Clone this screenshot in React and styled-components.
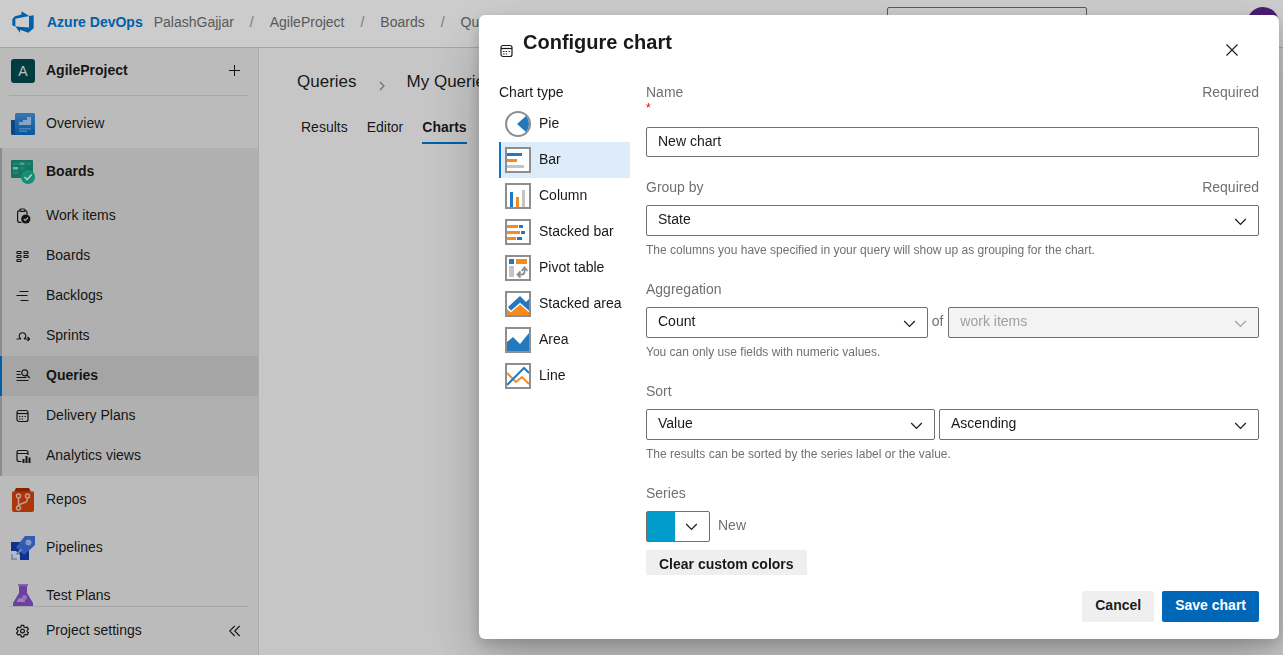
import React from "react";
import styled, { createGlobalStyle, css } from "styled-components";

const Global = createGlobalStyle`
  *, *::before, *::after { box-sizing: border-box; }
  html, body { margin: 0; height: 100%; }
  body {
    font-family: "Liberation Sans", Arial, sans-serif;
    font-size: 14px;
    line-height: 20px;
    color: rgba(0, 0, 0, 0.9);
    overflow: hidden;
  }
  #root { height: 100%; }
  button, input, select { font: inherit; color: inherit; margin: 0; }
  a { color: inherit; text-decoration: none; }
  svg { display: block; flex: none; }
`;

/* ---------- Page shell ---------- */

const Page = styled.div`
  display: flex;
  flex-direction: column;
  height: 100vh;
  background: #f8f8f8;
`;

const Header = styled.header`
  display: flex;
  align-items: center;
  height: 48px;
  flex: none;
  padding: 0 4px 4px 11px;
  background: #fff;
  border-bottom: 1px solid #d0d0d0;
`;

const Brand = styled.a`
  display: flex;
  align-items: center;
  gap: 12px;
  font-weight: bold;
  color: #0078d4;
`;

const Crumbs = styled.nav`
  display: flex;
  flex: 1;
  min-width: 0;
  margin-left: 11px;
  gap: 16px;
  color: #707070;
  white-space: nowrap;
  overflow: hidden;
`;

const Slash = styled.span`
  color: #9a9a9a;
`;

const Search = styled.input`
  width: 200px;
  height: 32px;
  margin: 2px 160px 0 0;
  padding: 0 8px;
  border: 1px solid #707070;
  border-radius: 2px;
  background: #fff;
`;

const Avatar = styled.button`
  width: 32px;
  height: 32px;
  margin-top: 2px;
  border: 0;
  border-radius: 50%;
  background: #5c2490;
  color: #fff;
`;

const Body = styled.div`
  display: flex;
  flex: 1;
  min-height: 0;
`;

/* ---------- Sidebar ---------- */

const Sidebar = styled.aside`
  display: flex;
  flex-direction: column;
  width: 259px;
  flex: none;
  background: #eaeaea;
  border-right: 1px solid #d6d6d6;
`;

const ProjectRow = styled.div`
  display: flex;
  align-items: center;
  height: 48px;
  flex: none;
  margin: 0 10px 4px 9px;
  padding: 0 8px 2px 2px;
  border-bottom: 1px solid #d0d0d0;
`;

const ProjectTile = styled.span`
  width: 24px;
  height: 24px;
  margin-right: 11px;
  border-radius: 3px;
  background: #004b50;
  color: #e8f0f0;
  line-height: 25px;
  text-align: center;
`;

const ProjectName = styled.a`
  flex: 1;
  padding-bottom: 2px;
  font-weight: bold;
`;

const IconButton = styled.button`
  display: flex;
  padding: 0;
  border: 0;
  background: none;
  cursor: pointer;
`;

const Nav = styled.nav`
  flex: 1;
  min-height: 0;
  overflow: hidden;
`;

const Group = styled.div`
  background: #dcdcdc;
  border-left: 2px solid #b0b0b0;
`;

const NavItem = styled.a`
  display: flex;
  align-items: center;
  height: ${(p) => (p.$sub ? 40 : 48)}px;
  padding-left: ${(p) => (p.$grouped ? 9 : 11)}px;
  font-weight: ${(p) => (p.$bold ? "bold" : "normal")};
  ${(p) =>
    p.$current &&
    css`
      margin-left: -2px;
      border-left: 2px solid #0078d4;
      background: #cfcfcf;
    `}
`;

const NavIcon = styled.span`
  display: flex;
  align-items: center;
  justify-content: center;
  width: 24px;
  height: 24px;
  margin-right: 11px;
`;

const NavText = styled.span`
  padding-bottom: 2px;
`;

const SidebarFooter = styled.div`
  display: flex;
  align-items: center;
  height: 49px;
  flex: none;
  margin: 0 10px 0 9px;
  padding: 0 7px 0 2px;
  border-top: 1px solid #d0d0d0;
`;

const FooterLink = styled.a`
  display: flex;
  flex: 1;
  align-items: center;
`;

/* ---------- Main area ---------- */

const Main = styled.main`
  flex: 1;
  min-width: 0;
  padding: 21px 38px;
`;

const Path = styled.div`
  display: flex;
  align-items: center;
  font-size: 17px;
  line-height: 26px;
  white-space: nowrap;
`;

const PathArrow = styled.span`
  margin: 8px 20px 0 21px;
`;

const TabRow = styled.div`
  display: flex;
  gap: 19px;
  margin-top: 21px;
  padding-left: 4px;
`;

const Tab = styled.a`
  height: 28px;
  padding-top: 1px;
  border-bottom: 2px solid ${(p) => (p.$active ? "#0078d4" : "transparent")};
  font-weight: ${(p) => (p.$active ? "bold" : "normal")};
`;

/* ---------- Dialog ---------- */

const Backdrop = styled.div`
  position: fixed;
  inset: 0;
  display: flex;
  justify-content: flex-end;
  padding: 15px 4px 16px;
  background: rgba(0, 0, 0, 0.2);
`;

const Dialog = styled.section`
  display: flex;
  flex-direction: column;
  width: 800px;
  max-width: 100%;
  background: #fff;
  border-radius: 6px;
  box-shadow: 0 26px 58px rgba(0, 0, 0, 0.22), 0 5px 14px rgba(0, 0, 0, 0.18);
`;

const DialogHeader = styled.div`
  display: flex;
  align-items: center;
  flex: none;
  height: 67px;
  padding: 0 40px 0 20px;
`;

const HeaderIcon = styled.span`
  margin: 4px 8px 0 0;
`;

const Title = styled.h2`
  flex: 1;
  margin: 0;
  padding-bottom: 14px;
  font-size: 20px;
  line-height: 28px;
`;

const CloseButton = styled(IconButton)`
  margin-top: 3px;
`;

const DialogBody = styled.div`
  display: flex;
  flex: 1;
  min-height: 0;
  padding: 0 20px;
  gap: 16px;
`;

const TypeList = styled.div`
  width: 131px;
  flex: none;
`;

const TypeHeading = styled.div`
  height: 24px;
`;

const TypeOption = styled.button`
  display: flex;
  align-items: center;
  gap: 8px;
  width: 100%;
  height: 36px;
  padding: 0 0 0 4px;
  border: 0;
  border-left: 2px solid ${(p) => (p.$selected ? "#0078d4" : "transparent")};
  background: ${(p) => (p.$selected ? "#deecf9" : "transparent")};
  text-align: left;
  white-space: nowrap;
`;

const TypeText = styled.span`
  padding-bottom: 2px;
`;

const Form = styled.form`
  flex: 1;
  min-width: 0;
  overflow: hidden;
`;

const Field = styled.div`
  margin-bottom: 20px;
`;

const LabelRow = styled.div`
  display: flex;
  justify-content: space-between;
  height: 28px;
  color: #707070;
`;

const Mark = styled.div`
  height: 27px;
  margin-top: -10px;
  color: #d00;
  font-size: 12px;
  line-height: 16px;
`;

const boxStyle = css`
  width: 100%;
  padding: 0 32px 3px 11px;
  border: 1px solid #707070;
  border-radius: 2px;
  background: #fff;
`;

const TextInput = styled.input`
  ${boxStyle}
  display: block;
  height: 30px;
`;

const SelectWrap = styled.div`
  position: relative;
  flex: ${(p) => p.$grow || 1} 1 0;
  min-width: 0;
`;

const Select = styled.select`
  ${boxStyle}
  display: block;
  height: 31px;
  appearance: none;
  opacity: 1;
  &:disabled {
    background: #f3f3f3;
    color: #a0a0a0;
  }
`;

const Arrow = styled.span`
  position: absolute;
  top: 13px;
  right: 12px;
  color: ${(p) => (p.$muted ? "#a0a0a0" : "#1a1a1a")};
  pointer-events: none;
`;

const Pair = styled.div`
  display: flex;
  gap: 4px;
`;

const Of = styled.span`
  padding-top: 4px;
  margin-right: 1px;
  color: #707070;
`;

const Help = styled.div`
  padding-top: 6px;
  color: #707070;
  font-size: 12px;
  line-height: 17px;
`;

const ColorRow = styled.div`
  display: flex;
  gap: 8px;
  color: #707070;
  line-height: 28px;
`;

const ColorPicker = styled.button`
  display: flex;
  align-items: center;
  width: 64px;
  height: 31px;
  padding: 0;
  border: 1px solid #707070;
  border-radius: 2px;
  background: #fff;
  color: #1a1a1a;
`;

const Swatch = styled.span`
  width: 28px;
  height: 100%;
  margin-right: 10px;
  background: #009ccc;
`;

const Button = styled.button`
  height: 31px;
  padding: 0 13px 3px;
  border: 0;
  border-radius: 2px;
  background: ${(p) => (p.$primary ? "#0067b8" : "#efefef")};
  color: ${(p) => (p.$primary ? "#fff" : "rgba(0, 0, 0, 0.9)")};
  font-weight: bold;
`;

const ClearButton = styled(Button)`
  display: block;
  margin-top: 8px;
`;

const DialogFooter = styled.div`
  display: flex;
  justify-content: flex-end;
  flex: none;
  gap: 8px;
  padding: 16px 20px 17px;
`;

/* ---------- Icons ---------- */

const Chevron = () => (
  <svg width="13" height="8" viewBox="0 0 13 8" fill="none" stroke="currentColor" strokeWidth="1.2">
    <path d="M1.200 1l5.300 5.500L11.800 1" />
  </svg>
);

const Line16 = ({ children }) => (
  <svg width="16" height="16" viewBox="0.5 0 16 16" fill="none" stroke="#1a1a1a" strokeWidth="1.2">
    {children}
  </svg>
);

const DevOpsLogo = () => (
  <svg width="24" height="24" viewBox="0 0 18 18" fill="#0078d4">
    <path d="M17 4v9.740l-4 3.280-6.200-2.260V17l-3.510-4.590 10.230.8V4.440zm-3.410.490L7.850 1v2.290L2.580 4.840 1 6.870v4.610l2.260 1V6.570z" />
  </svg>
);

const PlusIcon = () => (
  <svg width="11" height="11" viewBox="0 0 11 11" stroke="#1a1a1a" strokeWidth="1">
    <path d="M5.500 0v11M0 5.500h11" />
  </svg>
);

const OverviewIcon = () => (
  <svg width="24" height="24" viewBox="0 0 24 24">
    <defs>
      <linearGradient id="ov" x1="0" y1="0" x2="0" y2="1">
        <stop offset="0" stopColor="#4696dc" />
        <stop offset="1" stopColor="#0a6cc8" />
      </linearGradient>
    </defs>
    <path d="M0 8h5v15H1.500Q0 23 0 21.500z" fill="#0a5aa8" />
    <path d="M4 2.500Q4 1 5.500 1h17Q24 1 24 2.500v19q0 1.500-1.500 1.500H3q1 0 1-1.500z" fill="url(#ov)" />
    <path d="M8 13v-3h4V8h4V5h4v8z" fill="#a9cdf0" />
    <path d="M8 16h12v1.500H8zM8 18.500h8V20H8z" fill="#5aa2e4" />
  </svg>
);

const BoardsIcon = () => (
  <svg width="24" height="24" viewBox="0 0 24 24">
    <rect width="22" height="18" rx="1" fill="#1f917a" />
    <path d="M2 2.500h5V5H2zM15 2.500h5V5h-5zM8.500 7h5v2.500h-5zM2 11.500h5V14H2z" fill="#19b092" />
    <path d="M8.500 2.500h5V5h-5z" fill="#50d0b4" />
    <path d="M2 7h5v2.500H2z" fill="#8ce8d2" />
    <circle cx="17" cy="17" r="7" fill="#14b496" />
    <path d="M13.500 17l2.600 2.600 4.600-5" fill="none" stroke="#e6faf5" strokeWidth="1.600" />
  </svg>
);

const ReposIcon = () => (
  <svg width="24" height="24" viewBox="0 0 24 24">
    <path d="M5 0h13l2 4H3z" fill="#a62c00" />
    <path d="M1 4.500Q1 3.500 2 3.500h20q1 0 1 1V22q0 2-2 2H3q-2 0-2-2z" fill="#d8440c" />
    <g fill="none" stroke="#f3c6b5" strokeWidth="1.500">
      <circle cx="7.500" cy="8" r="2" />
      <circle cx="16.500" cy="8" r="2" />
      <circle cx="7.500" cy="20" r="2" />
      <path d="M7.500 10v8M7.500 17l7.500-3q1.500-.8 1.500-4" />
    </g>
  </svg>
);

const PipelinesIcon = () => (
  <svg width="24" height="24" viewBox="0 0 24 24">
    <path d="M0 6h9l9 9v9H9v-5l-4-4H0z" fill="#143cae" />
    <path d="M14 0h10v9L13 19l-8-8z" fill="#3c71e0" />
    <circle cx="17.500" cy="6.500" r="3" fill="#a0bcf4" />
    <path d="M10 12.500l1.500 1.500L5.500 20 4 18.500z" fill="#82a5ee" />
    <path d="M0 18h2v4h4v2H0z" fill="#9cb4ec" />
    <path d="M2 16l5 5" stroke="#e4e9f7" strokeWidth="1.400" />
  </svg>
);

const TestIcon = () => (
  <svg width="24" height="24" viewBox="0 0 24 24">
    <path d="M8 1h8v8l6 10v3H2v-3L8 9z" fill="#8a4fc6" />
    <path d="M7 0h10v2H7z" fill="#a67ae0" />
    <path d="M6 18a4 4 0 0 1 8 0z" fill="#c4a2ec" />
    <circle cx="13.500" cy="13.500" r="2.500" fill="#b48ee4" />
  </svg>
);

const WorkItemsIcon = () => (
  <svg width="16" height="16" viewBox="0 0 16 16" fill="none" stroke="#1a1a1a" strokeWidth="1.200">
    <path d="M6.500 14.400H4.500Q2.600 14.400 2.600 12.500V4.500Q2.600 2.600 4.500 2.600h6.200Q12 3 12 5v1.500" />
    <rect x="5" y="1" width="5" height="2.400" rx="1" fill="#dcdcdc" />
    <circle cx="10.800" cy="11" r="4.600" fill="#1a1a1a" stroke="none" />
    <path d="M8.800 11l1.500 1.500 2.800-3" stroke="#dcdcdc" />
  </svg>
);

const BoardSmallIcon = () => (
  <Line16>
    {[[2.5, 3.5], [2.5, 7.5], [2.5, 11.5], [9.5, 3.5], [9.5, 7.5]].map(([x, y]) => (
      <rect key={`${x}-${y}`} x={x} y={y} width="4" height="2" rx=".6" />
    ))}
  </Line16>
);

const BacklogIcon = () => (
  <Line16>
    <path d="M5 3.500h9M2 7.500h11M6 12.500h8" />
  </Line16>
);

const SprintIcon = () => (
  <Line16>
    <path d="M2 11h4.500A3.300 3.300 0 1 1 9.500 11H15M13 9l2 2-2 2" />
  </Line16>
);

const QueryIcon = () => (
  <Line16>
    <path d="M2 3.500h4M2 6.500h4M2 9.500h10M2 12.500h12M12.300 7l3 3" />
    <circle cx="10.200" cy="4.800" r="3" />
  </Line16>
);

const CalendarIcon = () => (
  <Line16>
    <rect x="2.500" y="2.500" width="11" height="11" rx="2" />
    <path d="M2.500 5.500h11" />
    <path d="M7.200 8.500h1.400M10 8.500h1.400M4.600 8.500H6M4.600 11H6M7.200 11h1.400" />
  </Line16>
);

const AnalyticsIcon = () => (
  <Line16>
    <path d="M7 13.500H4.500q-2 0-2-2v-7q0-2 2-2h7q2 0 2 2V7M2.500 5.500h11" />
    <path d="M9 11v4M12 8v7M15 9.500V15" strokeWidth="2" />
  </Line16>
);

const GearIcon = () => (
  <Line16>
    <circle cx="8" cy="8" r="1.900" />
    <path d="M6.800 2.300h2.400l.4 1.700 1.300.7 1.700-.6 1.300 2.100-1.300 1.200v1.300l1.300 1.200-1.300 2.100-1.700-.6-1.300.7-.4 1.700H6.800l-.4-1.700-1.300-.7-1.700.6-1.300-2.100 1.300-1.200V7.400L2.100 6.200l1.300-2.100 1.700.6L6.400 4z" />
  </Line16>
);

const CollapseIcon = () => (
  <svg width="12" height="12" viewBox="0 0 12 12" fill="none" stroke="#1a1a1a" strokeWidth="1.100">
    <path d="M5.700 1l-5 5 5 5M10.700 1l-5 5 5 5" />
  </svg>
);

const CloseIcon = () => (
  <svg width="14" height="14" viewBox="0 0 14 14" stroke="#1a1a1a" strokeWidth="1.100">
    <path d="M1.500 1.500l11 11M12.500 1.500l-11 11" />
  </svg>
);

const BLUE = "#2478bd";
const ORANGE = "#f58a1f";
const GREY = "#c4c4c4";

const glyphs = {
  Bar: (
    <>
      <path d="M2 6h15v3H2z" fill={BLUE} />
      <path d="M2 12h10v3H2z" fill={ORANGE} />
      <path d="M2 18h17v3H2z" fill={GREY} />
    </>
  ),
  Column: (
    <>
      <path d="M5 9h3v15H5z" fill={BLUE} />
      <path d="M11 14h3v10h-3z" fill={ORANGE} />
      <path d="M17 7h3v17h-3z" fill={GREY} />
    </>
  ),
  "Stacked bar": (
    <>
      <path d="M2 6h11v3H2zM2 12h13v3H2zM2 18h9v3H2z" fill={ORANGE} />
      <path d="M14 6h4v3h-4zM16 12h4v3h-4zM12 18h5v3h-5z" fill={BLUE} />
    </>
  ),
  "Pivot table": (
    <>
      <path d="M4 4h5v5H4z" fill={BLUE} />
      <path d="M11 4h11v5H11z" fill={ORANGE} />
      <path d="M4 11h5v11H4z" fill={GREY} />
      <path d="M13 19.500h3.500q3 0 3-3V13M16.500 16l3-3.500 3 3.500M15.500 16.500l-3 3 3 3" fill="none" stroke="#8e8e8e" strokeWidth="1.800" />
    </>
  ),
  "Stacked area": (
    <>
      <path d="M3 16l12-11 6 6 3-3v13l-9-8-9 7z" fill={BLUE} />
      <path d="M2 18l4 3 9-8 9 8v3H2z" fill={ORANGE} />
      <path d="M2 17l4 3.500 9-8 9 8" fill="none" stroke="#fff" strokeWidth="1.200" />
    </>
  ),
  Area: <path d="M2 15l6-5 7 7 9-11v18H2z" fill={BLUE} />,
  Line: (
    <>
      <path d="M2 10l9 9 6-5 7 7" fill="none" stroke={ORANGE} strokeWidth="2" />
      <path d="M2 22L19 5l5 5" fill="none" stroke={BLUE} strokeWidth="2" />
    </>
  ),
};

const TypeIcon = ({ name }) => (
  <svg width="26" height="26" viewBox="0 0 26 26">
    {name === "Pie" ? (
      <>
        <circle cx="13" cy="13" r="12" fill="#fff" stroke="#8e8e8e" strokeWidth="2" />
        <path d="M12 13l9-8q3 3.500 3 8t-3 8z" fill={BLUE} />
      </>
    ) : (
      <>
        <rect x="1" y="1" width="24" height="24" fill="#fff" />
        {glyphs[name]}
        <rect x="1" y="1" width="24" height="24" fill="none" stroke="#8e8e8e" strokeWidth="2" />
      </>
    )}
  </svg>
);

/* ---------- Data ---------- */

const crumbs = ["PalashGajjar", "AgileProject", "Boards", "Queries"];
const boardItems = [
  ["Work items", WorkItemsIcon],
  ["Boards", BoardSmallIcon],
  ["Backlogs", BacklogIcon],
  ["Sprints", SprintIcon],
  ["Queries", QueryIcon],
  ["Delivery Plans", CalendarIcon],
  ["Analytics views", AnalyticsIcon],
];
const hubs = [
  ["Repos", ReposIcon],
  ["Pipelines", PipelinesIcon],
  ["Test Plans", TestIcon],
];
const chartTypes = ["Pie", "Bar", "Column", "Stacked bar", "Pivot table", "Stacked area", "Area", "Line"];

function NavLink({ label, icon: Icon, sub, grouped, bold, current }) {
  return (
    <NavItem href="#" $sub={sub} $grouped={grouped} $bold={bold} $current={current}>
      <NavIcon><Icon /></NavIcon>
      <NavText>{label}</NavText>
    </NavItem>
  );
}

function Dropdown({ id, label, value, grow, disabled }) {
  return (
    <SelectWrap $grow={grow}>
      <Select id={id} aria-label={label} disabled={disabled} defaultValue={value}>
        <option>{value}</option>
      </Select>
      <Arrow $muted={disabled}><Chevron /></Arrow>
    </SelectWrap>
  );
}

function ConfigureDialog() {
  const [type, setType] = React.useState("Bar");
  return (
    <Backdrop>
      <Dialog role="dialog" aria-modal="true" aria-labelledby="dialog-title">
        <DialogHeader>
          <HeaderIcon><CalendarIcon /></HeaderIcon>
          <Title id="dialog-title">Configure chart</Title>
          <CloseButton aria-label="Close"><CloseIcon /></CloseButton>
        </DialogHeader>
        <DialogBody>
          <TypeList>
            <TypeHeading>Chart type</TypeHeading>
            {chartTypes.map((name) => (
              <TypeOption
                key={name}
                type="button"
                aria-pressed={type === name}
                $selected={type === name}
                onClick={() => setType(name)}
              >
                <TypeIcon name={name} />
                <TypeText>{name}</TypeText>
              </TypeOption>
            ))}
          </TypeList>
          <Form>
            <Field>
              <LabelRow>
                <label htmlFor="name">Name</label>
                <span>Required</span>
              </LabelRow>
              <Mark>*</Mark>
              <TextInput id="name" defaultValue="New chart" />
            </Field>
            <Field>
              <LabelRow>
                <label htmlFor="group">Group by</label>
                <span>Required</span>
              </LabelRow>
              <Dropdown id="group" value="State" />
              <Help>The columns you have specified in your query will show up as grouping for the chart.</Help>
            </Field>
            <Field>
              <LabelRow><label htmlFor="aggregation">Aggregation</label></LabelRow>
              <Pair>
                <Dropdown id="aggregation" value="Count" grow={282} />
                <Of>of</Of>
                <Dropdown id="agg-field" label="Aggregation field" value="work items" grow={311} disabled />
              </Pair>
              <Help>You can only use fields with numeric values.</Help>
            </Field>
            <Field>
              <LabelRow><label htmlFor="sort">Sort</label></LabelRow>
              <Pair>
                <Dropdown id="sort" value="Value" grow={289} />
                <Dropdown id="sort-order" label="Sort order" value="Ascending" grow={320} />
              </Pair>
              <Help>The results can be sorted by the series label or the value.</Help>
            </Field>
            <LabelRow>Series</LabelRow>
            <ColorRow>
              <ColorPicker type="button" aria-label="Series color">
                <Swatch />
                <Chevron />
              </ColorPicker>
              <span>New</span>
            </ColorRow>
            <ClearButton type="button">Clear custom colors</ClearButton>
          </Form>
        </DialogBody>
        <DialogFooter>
          <Button type="button">Cancel</Button>
          <Button type="button" $primary>Save chart</Button>
        </DialogFooter>
      </Dialog>
    </Backdrop>
  );
}

export default function App() {
  return (
    <>
      <Global />
      <Page>
        <Header>
          <Brand href="#"><DevOpsLogo />Azure DevOps</Brand>
          <Crumbs>
            {crumbs.map((c, i) => (
              <React.Fragment key={c}>
                {i > 0 && <Slash>/</Slash>}
                <a href="#">{c}</a>
              </React.Fragment>
            ))}
          </Crumbs>
          <Search aria-label="Search" />
          <Avatar aria-label="Account" />
        </Header>
        <Body>
          <Sidebar>
            <ProjectRow>
              <ProjectTile>A</ProjectTile>
              <ProjectName href="#">AgileProject</ProjectName>
              <IconButton aria-label="Add"><PlusIcon /></IconButton>
            </ProjectRow>
            <Nav>
              <NavLink label="Overview" icon={OverviewIcon} />
              <Group>
                <NavLink label="Boards" icon={BoardsIcon} grouped bold />
                {boardItems.map(([label, icon]) => (
                  <NavLink key={label} label={label} icon={icon} sub grouped bold={label === "Queries"} current={label === "Queries"} />
                ))}
              </Group>
              {hubs.map(([label, icon]) => (
                <NavLink key={label} label={label} icon={icon} />
              ))}
            </Nav>
            <SidebarFooter>
              <FooterLink href="#">
                <NavIcon><GearIcon /></NavIcon>
                <NavText>Project settings</NavText>
              </FooterLink>
              <IconButton aria-label="Collapse"><CollapseIcon /></IconButton>
            </SidebarFooter>
          </Sidebar>
          <Main>
            <Path>
              <a href="#">Queries</a>
              <PathArrow>
                <svg width="9" height="10" viewBox="0 0 9 10" fill="none" stroke="#8a8a8a" strokeWidth="1.200">
                  <path d="M2 1l4 4-4 4" />
                </svg>
              </PathArrow>
              <a href="#">My Queries</a>
            </Path>
            <TabRow>
              <Tab href="#">Results</Tab>
              <Tab href="#">Editor</Tab>
              <Tab href="#" $active>Charts</Tab>
            </TabRow>
          </Main>
        </Body>
      </Page>
      <ConfigureDialog />
    </>
  );
}
